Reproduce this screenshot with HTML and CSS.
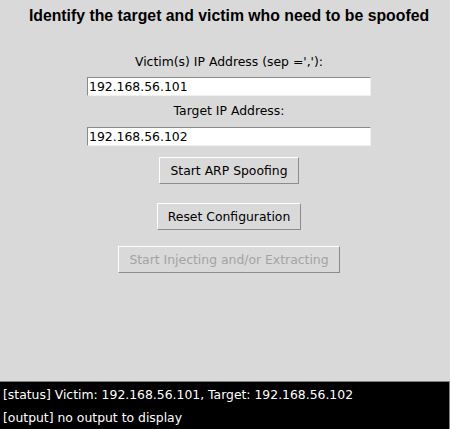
FILE: index.html
```html
<!DOCTYPE html>
<html>
<head>
<meta charset="utf-8">
<link rel="stylesheet" href="styles.css">
</head>
<body>
<div class="app">
  <div class="main">
    <div class="title">Identify the target and victim who need to be spoofed</div>
    <div class="label label-first">Victim(s) IP Address (sep =','):</div>
    <div class="entry">192.168.56.101</div>
    <div class="label">Target IP Address:</div>
    <div class="entry entry-second">192.168.56.102</div>
    <div class="btn btn-first">Start ARP Spoofing</div>
    <div class="btn btn-second">Reset Configuration</div>
    <div class="btn btn-third disabled">Start Injecting and/or Extracting</div>
  </div>
  <div class="console">
    <div class="line">[status] Victim: 192.168.56.101, Target: 192.168.56.102</div>
    <div class="line">[output] no output to display</div>
  </div>
</div>
</body>
</html>
```
FILE: styles.css
```css
html, body {
  margin: 0;
  padding: 0;
}
body {
  background: #d9d9d9;
  font-family: "DejaVu Sans", sans-serif;
  font-size: 12.4px;
  color: #000;
}
.app {
  width: 450px;
  height: 429px;
  display: flex;
  flex-direction: column;
}
.main {
  flex: 1;
  display: flex;
  flex-direction: column;
  align-items: center;
  padding-left: 8px;
}
.title {
  font-family: "Liberation Sans", Arial, sans-serif;
  font-weight: bold;
  font-size: 15.8px;
  line-height: 20px;
  margin-top: 6px;
  white-space: nowrap;
}
.label {
  line-height: 16px;
  margin-top: 7px;
  white-space: nowrap;
}
.label-first {
  margin-top: 28px;
}
.entry {
  width: 280px;
  height: 17px;
  line-height: 17px;
  padding: 0 1px;
  background: #fff;
  border-style: solid;
  border-width: 1px;
  border-color: #8a8a8a #f0f0f0 #f0f0f0 #8a8a8a;
  margin-top: 7px;
  white-space: nowrap;
}
.entry-second {
  margin-top: 8px;
}
.btn {
  height: 25px;
  line-height: 25px;
  padding: 0 10px;
  border-style: solid;
  border-width: 1px;
  border-color: #ffffff #8c8c8c #8c8c8c #ffffff;
  white-space: nowrap;
}
.btn-first {
  margin-top: 11px;
}
.btn-second {
  margin-top: 19px;
}
.btn-third {
  margin-top: 16px;
}
.disabled {
  color: #a3a3a3;
}
.console {
  height: 47px;
  background: #000;
  color: #ffffff;
  border-top: 1px solid #828282;
  border-right: 1px solid #828282;
  padding-left: 3px;
}
.line {
  line-height: 23px;
  white-space: nowrap;
}
.line:first-child {
  margin-top: 1px;
}
```
